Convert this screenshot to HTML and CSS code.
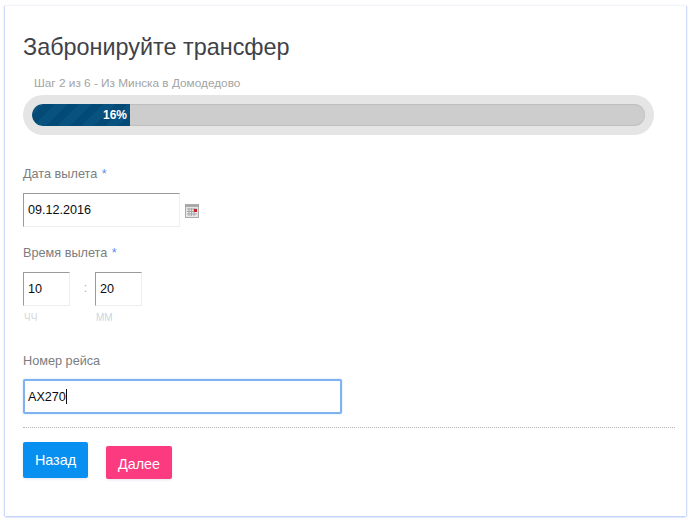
FILE: index.html
```html
<!DOCTYPE html>
<html lang="ru">
<head>
<meta charset="utf-8">
<title>Забронируйте трансфер</title>
<link rel="stylesheet" href="styles.css">
</head>
<body>
<form class="card">
  <h1 class="title">Забронируйте трансфер</h1>
  <div class="step">Шаг 2 из 6 - Из Минска в Домодедово</div>
  <div class="progress">
    <div class="track">
      <div class="fill">16%</div>
    </div>
  </div>

  <div class="label label-date">Дата вылета <span class="req">*</span></div>
  <div class="date-row">
    <div class="input input-date">09.12.2016</div>
    <svg class="cal" width="14" height="14" viewBox="0 0 14 14" aria-hidden="true">
      <rect x="0" y="0" width="14" height="14" fill="#a9a9a9"/>
      <rect x="1" y="3" width="12" height="10" fill="#e6e6e6"/>
      <path d="M2 5h10M2 7.500h10M2 10h10M4 4v8M6.500 4v8M9 4v8" stroke="#a8a8a8" stroke-width="1" fill="none"/>
      <rect x="9" y="5" width="3" height="3" fill="#c0262c"/>
    </svg>
  </div>

  <div class="label label-time">Время вылета <span class="req">*</span></div>
  <div class="time-row">
    <div class="time-col">
      <div class="input input-time">10</div>
      <div class="hint hint-hh">ЧЧ</div>
    </div>
    <div class="colon">:</div>
    <div class="time-col">
      <div class="input input-time">20</div>
      <div class="hint hint-mm">ММ</div>
    </div>
  </div>

  <div class="label label-flight">Номер рейса</div>
  <div class="input input-flight">AX270<span class="caret"></span></div>

  <div class="actions">
    <button type="button" class="btn btn-back">Назад</button>
    <button type="button" class="btn btn-next">Далее</button>
  </div>
</form>
</body>
</html>
```
FILE: styles.css
```css
* { box-sizing: border-box; }
html, body { margin: 0; background: #fff; }
body {
  padding: 6px 5px;
  font-family: "Liberation Sans", Arial, sans-serif;
  height: 522px;
  overflow: hidden;
}
.card {
  width: 681px;
  height: 510px;
  background: #fff;
  padding: 0 10px 0 18px;
  box-shadow: 0 -1px 1px #f1f2fc, -1px 0 1px #c9d5fb, 1px 0 1px #c9d5fb, 0 1px 2px #aabff5;
}
.title {
  margin: 0;
  padding-top: 27px;
  font-weight: 400;
  font-size: 23.4px;
  line-height: 28px;
  color: #3f4248;
}
.step {
  margin: 15px 0 0 11px;
  font-size: 11.8px;
  line-height: 14px;
  color: #a3a3a3;
}
.progress {
  width: 631px;
  height: 40px;
  margin-top: 5px;
  padding: 9px;
  background: #e5e5e5;
  border-radius: 20px;
}
.track {
  height: 22px;
  background: #cdcdcd;
  border-radius: 11px;
  overflow: hidden;
  box-shadow: inset 0 1px 1px #bdbdbd, inset 0 -1px 1px #bfbfbf;
}
.fill {
  width: 98px;
  height: 22px;
  padding-right: 3px;
  text-align: right;
  font-size: 12px;
  font-weight: 700;
  line-height: 22px;
  color: #fff;
  border-radius: 11px 0 0 11px;
  background-color: #034a76;
  background-image: linear-gradient(135deg, #07527f 25%, transparent 25%, transparent 50%, #07527f 50%, #07527f 75%, transparent 75%);
  background-size: 24px 24px;
}
.label {
  font-size: 12.7px;
  line-height: 14px;
  color: #7b7d80;
}
.req { color: #5b8fe8; margin-left: 1px; }
.label-date { margin-top: 32px; }
.date-row {
  display: flex;
  align-items: center;
  gap: 5px;
  margin-top: 12px;
}
.input {
  background: #fff;
  font-size: 12.6px;
  color: #0b0b10;
  padding-left: 4px;
  border: 1px solid #eeeeee;
  border-top-color: #9a9a9a;
  border-left-color: #9a9a9a;
}
.input-date {
  width: 157px;
  height: 34px;
  line-height: 32px;
}
.cal { display: block; margin-top: 1px; }
.label-time { margin-top: 19px; }
.time-row {
  display: flex;
  margin-top: 12px;
}
.time-col { width: 47px; }
.input-time {
  height: 34px;
  line-height: 33px;
  width: 47px;
}
.colon {
  width: 25px;
  padding: 9px 0 0 6px;
  text-align: center;
  font-size: 12px;
  color: #a9a9a9;
}
.hint {
  margin-top: 6px;
  font-size: 10px;
  line-height: 12px;
  padding-left: 1px;
}
.hint-hh { color: #d8d8d8; }
.hint-mm { color: #c9d5e2; }
.label-flight { margin-top: 30px; }
.input-flight {
  width: 319px;
  height: 35px;
  margin-top: 11px;
  line-height: 32px;
  border: 2px solid #7fb2ee;
  border-radius: 2px;
  padding-left: 3px;
  box-shadow: 0 0 2px #b8d3f5;
  display: flex;
  align-items: center;
}
.caret {
  display: block;
  width: 1px;
  height: 15px;
  background: #111;
}
.actions {
  display: flex;
  align-items: flex-start;
  gap: 18px;
  margin-top: 13px;
  padding-top: 14px;
  width: 652px;
  border-top: 1px dotted #b5b5b5;
}
.btn {
  border: 0;
  padding: 0;
  border-radius: 2px;
  font-family: inherit;
  font-size: 14.4px;
  color: #fff;
  box-shadow: 0 1px 3px #e3e6ee;
}
.btn-back {
  width: 65px;
  height: 36px;
  background: #0790f0;
}
.btn-next {
  width: 66px;
  height: 33px;
  margin-top: 4px;
  padding-top: 3px;
  background: #fb3a80;
}
```
